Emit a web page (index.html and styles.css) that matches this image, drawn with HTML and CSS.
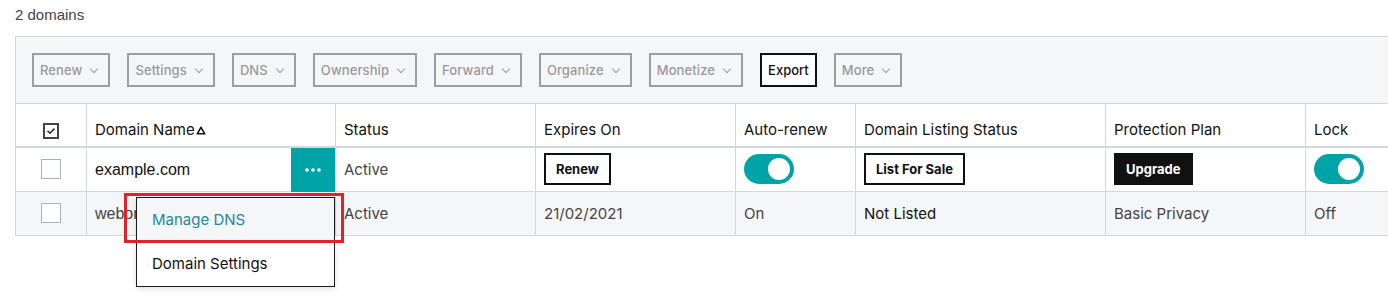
FILE: index.html
```html
<!DOCTYPE html>
<html>
<head>
    <meta charset="utf-8">
    <title>Domains</title>
    <link rel="stylesheet" href="styles.css">
</head>
<body>
    <div class="count">2 domains</div>

    <div class="domains">
        <div class="toolbar">
            <button type="button" class="tool-btn">Renew <span class="caret"></span></button>
            <button type="button" class="tool-btn">Settings <span class="caret"></span></button>
            <button type="button" class="tool-btn">DNS <span class="caret"></span></button>
            <button type="button" class="tool-btn">Ownership <span class="caret"></span></button>
            <button type="button" class="tool-btn">Forward <span class="caret"></span></button>
            <button type="button" class="tool-btn">Organize <span class="caret"></span></button>
            <button type="button" class="tool-btn">Monetize <span class="caret"></span></button>
            <button type="button" class="tool-btn export">Export</button>
            <button type="button" class="tool-btn">More <span class="caret"></span></button>
        </div>

        <table class="grid">
            <colgroup>
                <col class="c-check">
                <col class="c-name">
                <col class="c-status">
                <col class="c-expires">
                <col class="c-auto">
                <col class="c-listing">
                <col class="c-plan">
                <col>
            </colgroup>
            <thead>
                <tr>
                    <th class="check-cell">
                        <span class="checkbox checked">
                            <svg width="10" height="8" viewBox="0 0 10 8"><path d="M1.5 3.8 L4 6.2 L8.5 1.6" fill="none" stroke="#333" stroke-width="1.6"/></svg>
                        </span>
                    </th>
                    <th>Domain Name <svg class="sort" width="10" height="9" viewBox="0 0 10 9"><path d="M5 1.3 L8.8 7.8 L1.2 7.8 Z" fill="none" stroke="#111" stroke-width="1.6" stroke-linejoin="round"/></svg></th>
                    <th>Status</th>
                    <th>Expires On</th>
                    <th>Auto-renew</th>
                    <th>Domain Listing Status</th>
                    <th>Protection Plan</th>
                    <th>Lock</th>
                </tr>
            </thead>
            <tbody>
                <tr>
                    <td class="check-cell"><span class="checkbox"></span></td>
                    <td class="name-cell">
                        <span class="domain">example.com</span>
                        <button type="button" class="more-btn">
                            <svg width="16" height="4" viewBox="0 0 16 4"><circle cx="2" cy="2" r="1.8" fill="#fff"/><circle cx="8" cy="2" r="1.8" fill="#fff"/><circle cx="14" cy="2" r="1.8" fill="#fff"/></svg>
                        </button>
                    </td>
                    <td class="muted">Active</td>
                    <td><button type="button" class="row-btn">Renew</button></td>
                    <td><span class="toggle on"></span></td>
                    <td><button type="button" class="row-btn">List For Sale</button></td>
                    <td><button type="button" class="row-btn dark">Upgrade</button></td>
                    <td><span class="toggle on"></span></td>
                </tr>
                <tr class="alt">
                    <td class="check-cell"><span class="checkbox"></span></td>
                    <td class="name-cell"><span class="domain muted-domain">weborder.com</span></td>
                    <td class="muted">Active</td>
                    <td class="muted">21/02/2021</td>
                    <td class="muted">On</td>
                    <td>Not Listed</td>
                    <td class="muted">Basic Privacy</td>
                    <td class="muted">Off</td>
                </tr>
            </tbody>
        </table>

        <!-- row actions menu, opened from the ... button -->
        <div class="menu">
            <div class="menu-item active">Manage DNS</div>
            <div class="menu-item">Domain Settings</div>
        </div>
        <div class="highlight"></div>
    </div>
</body>
</html>
```

FILE: styles.css
```css
body {
    margin: 0;
    padding: 0 0 0 15px;
    min-height: 100vh;
    box-sizing: border-box;
    font-family: Inter, 'Open Sans', sans-serif;
    background: #fff;
    color: #111;
}
.count {
    font-family: 'Liberation Sans', Arial, sans-serif;
    font-size: 15px;
    color: #444;
    height: 36px;
    line-height: 30px;
}
.domains {
    position: relative;
    padding-bottom: 60px;
}
.toolbar {
    display: flex;
    gap: 17px;
    padding: 16px;
    background: #f5f6f8;
    border: 1px solid #d4d7da;
    border-right: none;
    border-bottom: none;
}
.tool-btn {
    display: flex;
    align-items: center;
    height: 34px;
    padding: 0 11px 0 6px;
    border: 2px solid #9e9e9e;
    background: #f5f6f8;
    color: #9a9a9a;
    font-family: Inter, sans-serif;
    font-size: 13px;
    font-weight: 500;
    letter-spacing: 0.1px;
}
.caret {
    width: 5px;
    height: 5px;
    margin: 0 0 3px 9px;
    border-right: 1.3px solid #9a9a9a;
    border-bottom: 1.3px solid #9a9a9a;
    transform: rotate(45deg);
}
.tool-btn.export {
    border-color: #111;
    background: #fff;
    color: #111;
    padding: 0 6px;
    letter-spacing: 0;
}
.grid {
    border-collapse: collapse;
    table-layout: fixed;
    width: 100%;
    font-size: 15px;
}
.c-check { width: 71px; }
.c-name { width: 249px; }
.c-status { width: 200px; }
.c-expires { width: 200px; }
.c-auto { width: 120px; }
.c-listing { width: 250px; }
.c-plan { width: 200px; }
.grid th, .grid td {
    height: 43px;
    padding: 0 8px;
    border: 1px solid #d4d7da;
    text-align: left;
    vertical-align: middle;
    white-space: nowrap;
}
.grid tr > :last-child {
    border-right: none;
}
.grid th {
    font-weight: 400;
    color: #111;
    border-bottom-width: 2px;
    height: 43px;
    padding-top: 9px;
    box-sizing: border-box;
}
.grid tr.alt td {
    background: #f5f6f8;
}
.grid .muted {
    color: #444;
}
.check-cell {
    text-align: center !important;
}
.checkbox {
    display: inline-flex;
    align-items: center;
    justify-content: center;
    width: 20px;
    height: 20px;
    box-sizing: border-box;
    border: 1px solid #a9b2bc;
    background: #fff;
    vertical-align: middle;
}
.checkbox.checked {
    width: 16px;
    height: 16px;
    border: 2px solid #444;
}
.sort {
    margin-left: -3px;
    vertical-align: 0;
}
.name-cell {
    position: relative;
}
.domain {
    font-family: 'Liberation Sans', Arial, sans-serif;
    font-size: 16px;
    color: #111;
}
.domain.muted-domain {
    color: #444;
}
.more-btn {
    position: absolute;
    top: 0;
    right: 0;
    width: 44px;
    height: 44px;
    border: none;
    background: #00a4a6;
    display: flex;
    align-items: center;
    justify-content: center;
    padding: 0;
}
.menu {
    position: absolute;
    top: 161px;
    left: 121px;
    width: 197px;
    background: #fff;
    border: 1px solid #1b1b1b;
    box-shadow: 0 2px 6px rgba(0,0,0,0.12);
    z-index: 2;
}
.menu-item {
    height: 44px;
    line-height: 44px;
    padding: 0 15px;
    font-size: 15px;
    color: #111;
}
.menu-item.active {
    background: #f5f6f8;
    color: #1d8a99;
}
.highlight {
    position: absolute;
    top: 157px;
    left: 109px;
    width: 214px;
    height: 44px;
    border: 3px solid #e3212b;
    z-index: 3;
}
.row-btn {
    height: 32px;
    padding: 0 10px;
    border: 2px solid #111;
    background: #fff;
    color: #111;
    font-family: Inter, sans-serif;
    font-size: 13px;
    font-weight: 700;
}
.row-btn.dark {
    background: #111;
    color: #fff;
}
.toggle {
    display: inline-block;
    position: relative;
    width: 50px;
    height: 30px;
    border-radius: 15px;
    background: #00a4a6;
    vertical-align: middle;
}
.toggle::after {
    content: "";
    position: absolute;
    top: 4px;
    right: 4px;
    width: 22px;
    height: 22px;
    border-radius: 50%;
    background: #fff;
}
```
